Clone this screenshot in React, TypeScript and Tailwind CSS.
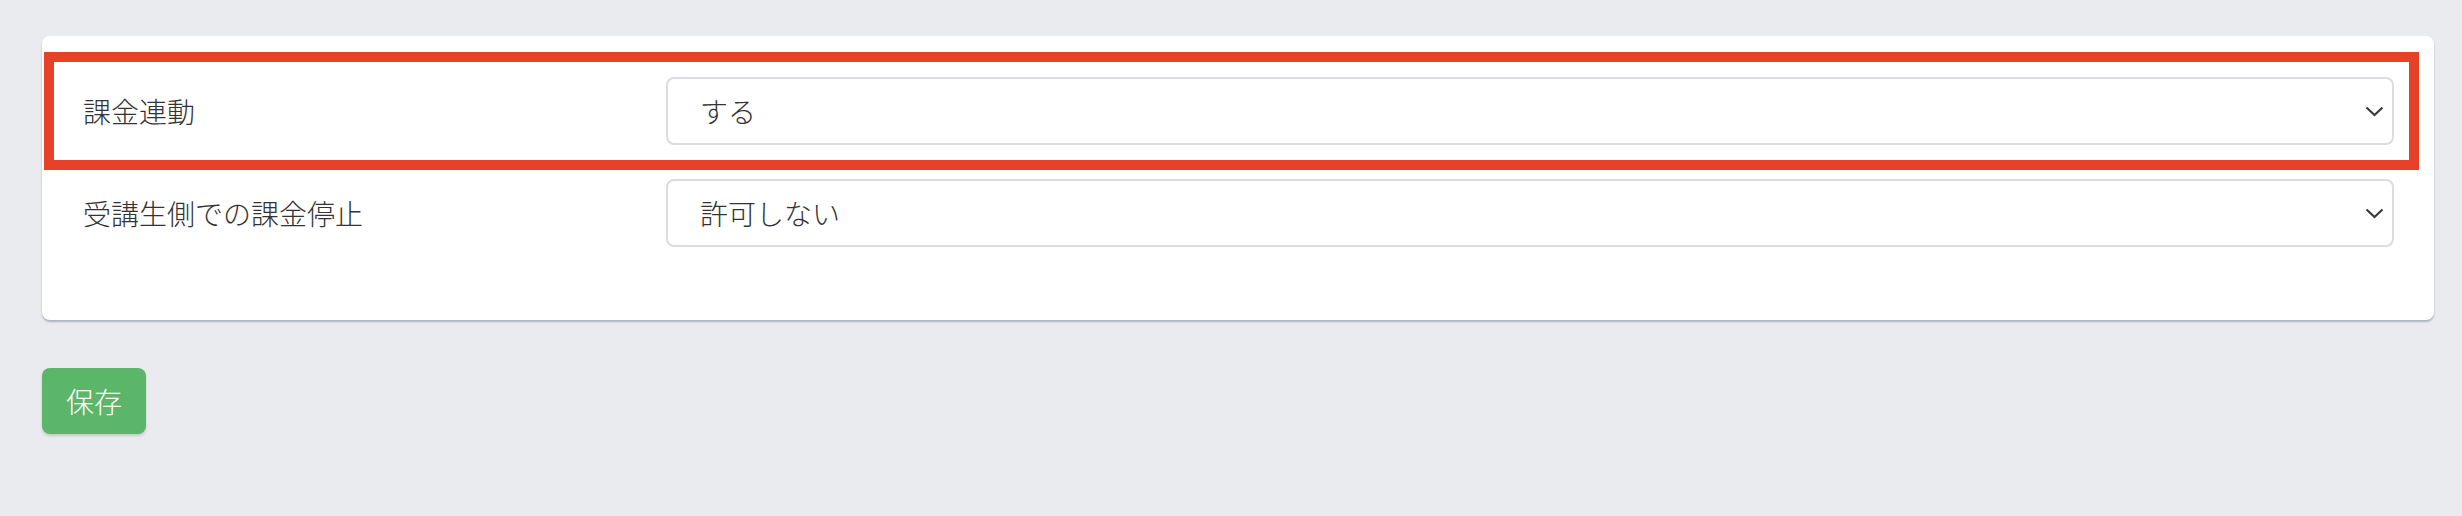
import React from "react";

const Chevron = () => (
  <svg width="19" height="11" viewBox="0 0 19 11" fill="none" className="shrink-0">
    <path d="M1.5 1.5 L9.5 9 L17.5 1.5" stroke="#3a3a3a" strokeWidth="2.2" strokeLinecap="butt" strokeLinejoin="miter" />
  </svg>
);

const Row = ({ label, value }: { label: string; value: string }) => (
  <div className="flex items-center h-[68px]">
    <div className="w-[583px] shrink-0 text-[28px] font-light leading-none text-[#333333]">{label}</div>
    <div className="flex-1 h-[68px] flex items-center justify-between border-2 border-[#dcdce1] rounded-[8px] bg-white pl-[32px] pr-[8px]">
      <span className="text-[28px] font-light leading-none text-[#333333]">{value}</span>
      <Chevron />
    </div>
  </div>
);

export default function App() {
  return (
    <div
      className="w-[2462px] h-[516px] bg-[#eaebee] pt-[36px] pl-[42px]"
      style={{ fontFamily: '"Noto Sans CJK JP", "Noto Sans", sans-serif' }}
    >
      <div className="relative w-[2392px] h-[284px] bg-white rounded-[8px] shadow-[0_2px_2px_rgba(120,135,155,0.55)] pt-[41px] pl-[41px] pr-[40px] flex flex-col gap-[34px]">
        <Row label="課金連動" value="する" />
        <Row label="受講生側での課金停止" value="許可しない" />
        <div className="absolute left-[2px] top-[16px] w-[2375px] h-[118px] border-[10px] border-[#e8412a] pointer-events-none" />
      </div>
      <button className="mt-[48px] w-[104px] h-[66px] rounded-[8px] bg-[#5cb66a] text-white text-[28px] font-light leading-none shadow-[0_2px_3px_rgba(0,0,0,0.15)] flex items-center justify-center">
        保存
      </button>
    </div>
  );
}
